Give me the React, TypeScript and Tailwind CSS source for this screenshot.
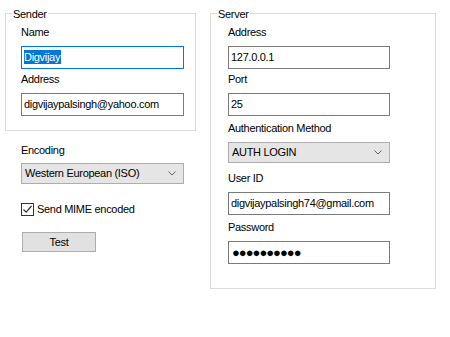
import React from "react";

type FieldProps = {
  label: string;
  className?: string;
  children: React.ReactNode;
};

// label above a control, like the WinForms designer lays them out
function Field({ label, className = "", children }: FieldProps) {
  return (
    <div className={className}>
      <div className="h-[13px] leading-[13px] whitespace-nowrap">{label}</div>
      <div className="mt-[7px]">{children}</div>
    </div>
  );
}

function TextBox({
  width,
  focused,
  children,
}: {
  width: string;
  focused?: boolean;
  children: React.ReactNode;
}) {
  return (
    <div
      className={`${width} h-[23px] border ${
        focused ? "border-[#0078d7]" : "border-[#7a7a7a]"
      } bg-white pl-[2px] leading-[21px] whitespace-nowrap overflow-hidden`}
    >
      {children}
    </div>
  );
}

function ComboBox({ width, value }: { width: string; value: string }) {
  return (
    <div
      className={`${width} h-[21px] border border-[#adadad] bg-[#e5e5e5] flex items-center justify-between pl-[3px] pr-[7px] whitespace-nowrap`}
    >
      <span className="leading-[19px]">{value}</span>
      <svg width="8" height="5" viewBox="0 0 8 5" fill="none">
        <path d="M0.5 0.5 L4 4 L7.5 0.5" stroke="#606060" strokeWidth="1" />
      </svg>
    </div>
  );
}

function GroupBox({
  title,
  className,
  children,
}: {
  title: string;
  className: string;
  children: React.ReactNode;
}) {
  return (
    <fieldset className={`border border-[#dcdcdc] ${className}`}>
      <legend className="ml-[6px] px-[1px] pt-[2px] leading-[14px]">{title}</legend>
      {children}
    </fieldset>
  );
}

export default function App() {
  return (
    <div className="w-[450px] h-[337px] bg-white text-black text-[11px] tracking-[-0.3px] font-['Liberation_Sans',Arial,sans-serif] flex items-start pt-[5px] pl-[5px] gap-[14px]">
      {/* Left column */}
      <div className="flex flex-col w-[191px]">
        <GroupBox title="Sender" className="w-[191px] h-[126px]">
          <div className="pl-[15px]">
            <Field label="Name" className="mt-[5px]">
              <TextBox width="w-[163px]" focused>
                <span className="bg-[#0078d7] text-white inline-block leading-[14px] pr-[1px]">
                  Digvijay
                </span>
              </TextBox>
            </Field>
            <Field label="Address" className="mt-[4px]">
              <TextBox width="w-[163px]">digvijaypalsingh@yahoo.com</TextBox>
            </Field>
          </div>
        </GroupBox>

        <div className="pl-[16px]">
          <div className="mt-[13px] h-[13px] leading-[13px]">Encoding</div>
          <div className="mt-[6px]">
            <ComboBox width="w-[163px]" value="Western European (ISO)" />
          </div>

          <div className="mt-[19px] flex items-center gap-[3px]">
            <div className="w-[13px] h-[13px] border border-[#333333] bg-white flex items-center justify-center">
              <svg width="11" height="11" viewBox="0 0 11 11" fill="none">
                <path d="M1.5 5.5 L4.2 8.2 L9.5 2" stroke="#333333" strokeWidth="1.2" />
              </svg>
            </div>
            <span className="leading-[13px]">Send MIME encoded</span>
          </div>

          <button className="mt-[16px] ml-[1px] w-[74px] h-[20px] border border-[#adadad] bg-[#e1e1e1] flex items-center justify-center leading-[18px]">
            Test
          </button>
        </div>
      </div>

      {/* Right column */}
      <GroupBox title="Server" className="w-[226px] h-[284px]">
        <div className="pl-[17px]">
          <Field label="Address" className="mt-[5px]">
            <TextBox width="w-[162px]">127.0.0.1</TextBox>
          </Field>
          <Field label="Port" className="mt-[4px]">
            <TextBox width="w-[162px]">25</TextBox>
          </Field>
          <Field label="Authentication Method" className="mt-[6px]">
            <ComboBox width="w-[162px]" value="AUTH LOGIN" />
          </Field>
          <Field label="User ID" className="mt-[9px]">
            <TextBox width="w-[162px]">digvijaypalsingh74@gmail.com</TextBox>
          </Field>
          <Field label="Password" className="mt-[6px]">
            <TextBox width="w-[162px]">
              <span className="tracking-[-1px] text-[13px] pl-[1px]">●●●●●●●●●●</span>
            </TextBox>
          </Field>
        </div>
      </GroupBox>
    </div>
  );
}
